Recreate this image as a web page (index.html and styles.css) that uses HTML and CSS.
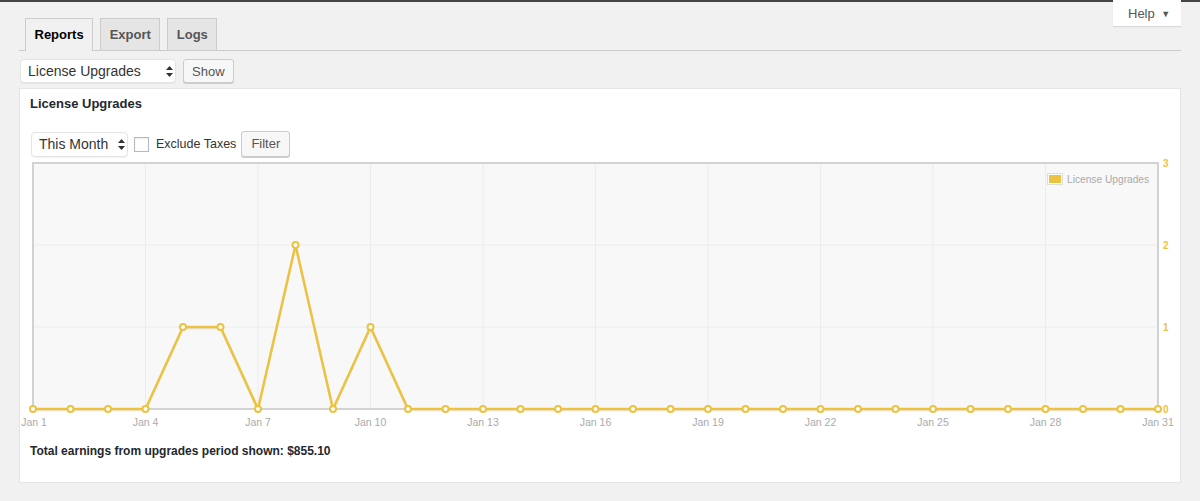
FILE: index.html
```html
<!DOCTYPE html>
<html lang="en">
<head>
    <meta charset="UTF-8">
    <meta name="viewport" content="width=device-width, initial-scale=1.0">
    <title>Reports</title>
    <link rel="stylesheet" href="styles.css">
</head>
<body>
    <div class="topbar"></div>

    <a class="help-tab" href="#">Help <span class="help-arrow">&#9660;</span></a>

    <div class="wrap">
        <nav class="nav-tabs">
            <a class="nav-tab active" href="#">Reports</a>
            <a class="nav-tab" href="#">Export</a>
            <a class="nav-tab" href="#">Logs</a>
        </nav>

        <form class="report-picker">
            <span class="select-wrap report-select">
                <select>
                    <option>License Upgrades</option>
                </select>
                <svg class="select-arrows" width="7" height="11" viewBox="0 0 7 11"><path d="M3.5 0L7 4H0zM3.5 11L0 7h7z" fill="#333"/></svg>
            </span>
            <button type="button" class="button">Show</button>
        </form>

        <div class="postbox">
            <h3 class="postbox-title">License Upgrades</h3>

            <div class="filters">
                <span class="select-wrap range-select">
                    <select>
                        <option>This Month</option>
                    </select>
                    <svg class="select-arrows" width="7" height="11" viewBox="0 0 7 11"><path d="M3.5 0L7 4H0zM3.5 11L0 7h7z" fill="#333"/></svg>
                </span>
                <label class="check"><input type="checkbox"> Exclude Taxes</label>
                <button type="button" class="button button-tall">Filter</button>
            </div>

            <svg class="chart" width="1160" height="275" viewBox="0 -5 1160 275">
                <!-- plot background + grid -->
                <rect x="13" y="3" width="1125" height="246" fill="#f8f8f8"/>
                <g stroke="#ececec" stroke-width="1">
                    <line x1="125.5" y1="3" x2="125.5" y2="249"/>
                    <line x1="238" y1="3" x2="238" y2="249"/>
                    <line x1="350.5" y1="3" x2="350.5" y2="249"/>
                    <line x1="463" y1="3" x2="463" y2="249"/>
                    <line x1="575.5" y1="3" x2="575.5" y2="249"/>
                    <line x1="688" y1="3" x2="688" y2="249"/>
                    <line x1="800.5" y1="3" x2="800.5" y2="249"/>
                    <line x1="913" y1="3" x2="913" y2="249"/>
                    <line x1="1025.5" y1="3" x2="1025.5" y2="249"/>
                    <line x1="13" y1="85" x2="1138" y2="85"/>
                    <line x1="13" y1="167" x2="1138" y2="167"/>
                </g>
                <rect x="13" y="3" width="1125" height="246" fill="none" stroke="#d2d2d2" stroke-width="2"/>

                <!-- legend -->
                <rect x="1027.5" y="13.5" width="15" height="11" fill="#fff" stroke="#ddd"/>
                <rect x="1029" y="15" width="12" height="8" fill="#edc240"/>
                <text x="1047" y="23" class="legend">License Upgrades</text>

                <!-- series -->
                <polyline points="13,250.5 50.5,250.5 88,250.5 125.5,250.5 163,168.5 200.5,168.5 238,250.5 275.5,86.5 313,250.5 350.5,168.5 388,250.5 1138,250.5" fill="none" stroke="rgba(0,0,0,0.08)" stroke-width="2"/>
                <polyline points="13,249 50.5,249 88,249 125.5,249 163,167 200.5,167 238,249 275.5,85 313,249 350.5,167 388,249 1138,249" fill="none" stroke="#edc240" stroke-width="2.5" stroke-linejoin="round"/>
                <g fill="#fff" stroke="#edc240" stroke-width="2">
                    <circle cx="13" cy="249" r="3"/>
                    <circle cx="50.5" cy="249" r="3"/>
                    <circle cx="88" cy="249" r="3"/>
                    <circle cx="125.5" cy="249" r="3"/>
                    <circle cx="163" cy="167" r="3"/>
                    <circle cx="200.5" cy="167" r="3"/>
                    <circle cx="238" cy="249" r="3"/>
                    <circle cx="275.5" cy="85" r="3"/>
                    <circle cx="313" cy="249" r="3"/>
                    <circle cx="350.5" cy="167" r="3"/>
                    <circle cx="388" cy="249" r="3"/>
                    <circle cx="425.5" cy="249" r="3"/>
                    <circle cx="463" cy="249" r="3"/>
                    <circle cx="500.5" cy="249" r="3"/>
                    <circle cx="538" cy="249" r="3"/>
                    <circle cx="575.5" cy="249" r="3"/>
                    <circle cx="613" cy="249" r="3"/>
                    <circle cx="650.5" cy="249" r="3"/>
                    <circle cx="688" cy="249" r="3"/>
                    <circle cx="725.5" cy="249" r="3"/>
                    <circle cx="763" cy="249" r="3"/>
                    <circle cx="800.5" cy="249" r="3"/>
                    <circle cx="838" cy="249" r="3"/>
                    <circle cx="875.5" cy="249" r="3"/>
                    <circle cx="913" cy="249" r="3"/>
                    <circle cx="950.5" cy="249" r="3"/>
                    <circle cx="988" cy="249" r="3"/>
                    <circle cx="1025.5" cy="249" r="3"/>
                    <circle cx="1063" cy="249" r="3"/>
                    <circle cx="1100.5" cy="249" r="3"/>
                    <circle cx="1138" cy="249" r="3"/>
                </g>

                <!-- y axis -->
                <g class="y-axis">
                    <text x="1143" y="7">3</text>
                    <text x="1143" y="89">2</text>
                    <text x="1143" y="171">1</text>
                    <text x="1143" y="253">0</text>
                </g>

                <!-- x axis -->
                <g class="x-axis">
                    <text x="14" y="266">Jan 1</text>
                    <text x="125.5" y="266">Jan 4</text>
                    <text x="238" y="266">Jan 7</text>
                    <text x="350.5" y="266">Jan 10</text>
                    <text x="463" y="266">Jan 13</text>
                    <text x="575.5" y="266">Jan 16</text>
                    <text x="688" y="266">Jan 19</text>
                    <text x="800.5" y="266">Jan 22</text>
                    <text x="913" y="266">Jan 25</text>
                    <text x="1025.5" y="266">Jan 28</text>
                    <text x="1138" y="266">Jan 31</text>
                </g>
            </svg>

            <p class="total">Total earnings from upgrades period shown: $855.10</p>
        </div>
    </div>
</body>
</html>
```

FILE: styles.css
```css
body {
    margin: 0;
    background-color: #f1f1f1;
    font-family: "Liberation Sans", Arial, sans-serif;
    font-size: 13px;
    color: #444;
    position: relative;
}

.topbar {
    height: 2px;
    background: #444;
}

.help-tab {
    position: absolute;
    top: 0;
    right: 19px;
    width: 68px;
    height: 26px;
    box-sizing: border-box;
    padding-left: 15px;
    line-height: 27px;
    background: #fff;
    color: #555;
    text-decoration: none;
    box-shadow: 0 1px 1px rgba(0, 0, 0, 0.1);
}

    .help-arrow {
        font-size: 9px;
        margin-left: 3px;
        vertical-align: 1px;
    }

.wrap {
    margin: 0 19px;
    padding-top: 16px;
}

.nav-tabs {
    display: flex;
    gap: 7px;
    padding-left: 6px;
    border-bottom: 1px solid #ccc;
}

.nav-tab {
    height: 31px;
    line-height: 31px;
    padding: 0 8.5px;
    border: 1px solid #ccc;
    border-bottom: none;
    background: #e5e5e5;
    color: #555;
    font-weight: bold;
    font-size: 13px;
    text-decoration: none;
}

    .nav-tab.active {
        background: #f1f1f1;
        color: #000;
        margin-bottom: -1px;
        height: 32px;
    }

.report-picker {
    display: flex;
    align-items: center;
    gap: 7px;
    margin: 8px 0 0 1px;
}

.select-wrap {
    position: relative;
    display: inline-block;
}

    .select-wrap select {
        -webkit-appearance: none;
        appearance: none;
        display: block;
        box-sizing: border-box;
        padding: 0 0 0 7px;
        border: 1px solid #e4e4e4;
        border-radius: 4px;
        background: #fff;
        box-shadow: 0 1px 1px rgba(0, 0, 0, 0.05);
        font-family: inherit;
        font-size: 14px;
        color: #333;
    }

.select-arrows {
    position: absolute;
    right: 3px;
    top: 50%;
    margin-top: -5px;
}

.report-select select {
    width: 156px;
    height: 24px;
}

.range-select select {
    width: 97px;
    height: 25px;
}

.button {
    height: 24px;
    padding: 0 8px;
    border: 1px solid #ccc;
    border-radius: 3px;
    background: #f7f7f7;
    box-shadow: 0 1px 0 #ccc;
    font-family: inherit;
    font-size: 13px;
    color: #555;
    cursor: pointer;
}

    .button-tall {
        height: 26px;
        margin-top: -1px;
        padding: 0 9px;
    }

.postbox {
    margin-top: 5px;
    background: #fff;
    border: 1px solid #e5e5e5;
    box-shadow: 0 1px 1px rgba(0, 0, 0, 0.04);
}

.postbox-title {
    margin: 0;
    padding: 6px 10px 0;
    font-size: 13px;
    line-height: 18px;
    color: #23282d;
}

.filters {
    display: flex;
    align-items: center;
    margin-top: 18px;
    padding-left: 11px;
    height: 26px;
}

.check {
    display: flex;
    align-items: center;
    margin-left: 6px;
    margin-right: 5px;
    font-size: 12.5px;
    color: #333;
}

    .check input {
        -webkit-appearance: none;
        appearance: none;
        width: 15px;
        height: 15px;
        margin: 0 7px 0 0;
        border: 1px solid #b4b9be;
        background: #fff;
        box-shadow: inset 0 1px 2px rgba(0, 0, 0, 0.07);
    }

.chart {
    display: block;
    margin-top: -2px;
}

    .chart .legend {
        font-size: 10.2px;
        fill: #aaa;
    }

    .chart .y-axis text {
        font-size: 10px;
        font-weight: bold;
        fill: #edc240;
    }

    .chart .x-axis text {
        font-size: 10.5px;
        fill: #aaa;
        text-anchor: middle;
    }

.total {
    margin: 13px 0 0;
    padding: 0 10px 23px;
    font-weight: bold;
    font-size: 12px;
    line-height: 16px;
    color: #23282d;
}
```
